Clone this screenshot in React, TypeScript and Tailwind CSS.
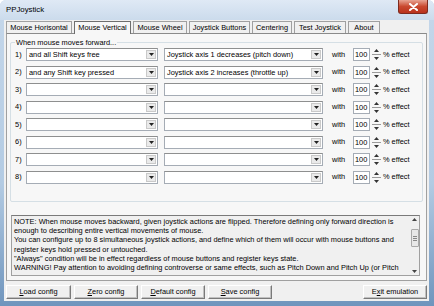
import React from 'react';

const font = { fontFamily: '"Liberation Sans", Arial, sans-serif' };

const tabs = [
  { label: 'Mouse Horisontal', w: 'w-[66px]' },
  { label: 'Mouse Vertical', w: 'w-[57px]', active: true },
  { label: 'Mouse Wheel', w: 'w-[54px]' },
  { label: 'Joystick Buttons', w: 'w-[61px]' },
  { label: 'Centering', w: 'w-[40px]' },
  { label: 'Test Joystick', w: 'w-[52px]' },
  { label: 'About', w: 'w-[32px]' },
];

const rows = [
  { cond: 'and all Shift keys free', action: 'Joystick axis 1 decreases (pitch down)' },
  { cond: 'and any Shift key pressed', action: 'Joystick axis 2 increases (throttle up)' },
  { cond: '', action: '' },
  { cond: '', action: '' },
  { cond: '', action: '' },
  { cond: '', action: '' },
  { cond: '', action: '' },
  { cond: '', action: '' },
];

const Combo = ({ text, w }: { text: string; w: string }) => (
  <div className={`${w} h-[13px] flex items-stretch bg-white border border-[#a5acb5] border-t-[#8e8f8f]`}>
    <div className="flex-1 px-[2px] leading-[11px] truncate text-black">{text}</div>
    <div className="w-[10px] m-[1px] flex items-center justify-center bg-[#eaeaea] border border-[#c9c9c9]">
      <svg width="5" height="3" viewBox="0 0 5 3"><path d="M0 0h5L2.5 3z" fill="#222" /></svg>
    </div>
  </div>
);

const Btn = ({ children, w }: { children: React.ReactNode; w: string }) => (
  <div className={`${w} h-[14px] flex items-center justify-center bg-[#f0f0f0] border border-[#fff] border-r-[#7a7a7a] border-b-[#7a7a7a] shadow-[inset_-1px_-1px_0_#c0c0c0] text-black`}>
    {children}
  </div>
);

export default function App() {
  return (
    <div
      className="w-[434px] h-[306px] flex flex-col bg-[linear-gradient(180deg,#c5d7ea_0%,#b3cbe3_60%,#6f95bd_100%)] rounded-t-[6px] overflow-hidden text-[7.4px]"
      style={font}
    >
      {/* title bar */}
      <div className="h-[20px] shrink-0 flex items-start justify-between pl-[6px] pr-[6px] bg-[linear-gradient(180deg,#dfe9f5,#cbdbec)]">
        <span className="mt-[6px] text-[7.8px] text-black leading-none">PPJoystick</span>
        <div className="w-[30px] h-[14px] flex items-center justify-center rounded-b-[3px] bg-[linear-gradient(180deg,#e8a493_0%,#c9482f_50%,#b9321c_100%)] border border-[#7d2a1e] border-t-0">
          <svg width="9" height="8" viewBox="0 0 9 8">
            <path d="M1 1l7 6M8 1L1 7" stroke="#fff" strokeWidth="2" strokeLinecap="round" />
          </svg>
        </div>
      </div>

      {/* client area */}
      <div className="flex-1 mx-[4px] mr-[5px] mb-[5px] bg-[#f0f0f0] flex flex-col pl-[2px] pr-[2px]">
        {/* tabs */}
        <div className="h-[13px] shrink-0 flex items-end gap-[2px]">
          {tabs.map((t) =>
            t.active ? (
              <div
                key={t.label}
                className={`${t.w} h-[13px] flex items-center justify-center bg-[#f7f7f7] border border-[#6e6e6e] border-b-0 text-black relative top-[1px]`}
              >
                {t.label}
              </div>
            ) : (
              <div
                key={t.label}
                className={`${t.w} h-[12px] flex items-center justify-center bg-[#f0f0f0] border border-[#a0a0a0] border-b-0 text-black`}
              >
                {t.label}
              </div>
            )
          )}
        </div>

        {/* tab panel */}
        <div className="h-[248px] shrink-0 bg-[#f7f7f7] border border-[#a0a0a0] border-t-[#8a8a8a] flex flex-col px-[3px]">
          {/* group box */}
          <div className="mt-[8px] h-[160px] border border-[#d5dfe5] rounded-[2px] relative flex flex-col pt-[5px]">
            <span className="absolute -top-[5px] left-[4px] px-[1px] bg-[#f7f7f7] leading-[9px] text-black">
              When mouse moves forward...
            </span>
            <div className="flex flex-col gap-[4.5px]">
              {rows.map((r, i) => (
                <div key={i} className="h-[13px] flex items-center">
                  <span className="w-[15px] pl-[4px] text-black">{i + 1})</span>
                  <Combo text={r.cond} w="w-[132px]" />
                  <div className="w-[6px]" />
                  <Combo text={r.action} w="w-[159px]" />
                  <span className="ml-[9px] w-[21px] text-black">with</span>
                  <div className="w-[17px] h-[13px] bg-white border border-[#a5acb5] leading-[11px] pl-[1px] text-black">100</div>
                  <div className="w-[12px] h-[13px] flex flex-col items-center justify-center gap-[2px]">
                    <svg width="5" height="3" viewBox="0 0 5 3"><path d="M0 3h5L2.5 0z" fill="#333" /></svg>
                    <div className="w-[9px] h-px bg-[#9a9a9a]" />
                    <svg width="5" height="3" viewBox="0 0 5 3"><path d="M0 0h5L2.5 3z" fill="#333" /></svg>
                  </div>
                  <span className="ml-[1px] text-black">% effect</span>
                </div>
              ))}
            </div>
          </div>

          {/* note memo */}
          <div className="mt-[13px] ml-[1px] w-[409px] h-[61px] bg-[#f0f0f0] border border-[#a0a0a0] border-t-[#7a7a7a] flex">
            <div className="flex-1 pl-[2px] pt-[1px] leading-[9.2px] text-black overflow-hidden">
              <div className="whitespace-nowrap">NOTE: When mouse moves backward, given joystick actions are flipped. Therefore defining only forward direction is</div>
              <div className="whitespace-nowrap">enough to describing entire vertical movements of mouse.</div>
              <div className="whitespace-nowrap">You can configure up to 8 simultaneous joystick actions, and define which of them will occur with mouse buttons and</div>
              <div className="whitespace-nowrap">register keys hold pressed or untouched.</div>
              <div className="whitespace-nowrap">"Always" condition will be in effect regardless of mouse buttons and register keys state.</div>
              <div className="whitespace-nowrap">WARNING! Pay attention to avoiding defining controverse or same effects, such as Pitch Down and Pitch Up (or Pitch</div>
            </div>
            <div className="w-[9px] flex flex-col items-center py-[2px]">
              <svg width="5" height="4" viewBox="0 0 5 4"><path d="M0 3h5L2.5 0z" fill="#444" /></svg>
              <div className="mt-[7px] w-[8px] h-[18px] bg-[#e8e8e8] border border-[#a9a9a9] rounded-[1px] flex flex-col items-center justify-center gap-[1px]">
                <div className="w-[4px] h-px bg-[#888]" />
                <div className="w-[4px] h-px bg-[#888]" />
                <div className="w-[4px] h-px bg-[#888]" />
              </div>
              <div className="flex-1" />
              <svg width="5" height="4" viewBox="0 0 5 4"><path d="M0 1h5L2.5 4z" fill="#444" /></svg>
            </div>
          </div>
        </div>

        {/* buttons */}
        <div className="mt-[4px] flex items-center gap-[3px]">
          <Btn w="w-[65px]"><span><u>L</u>oad config</span></Btn>
          <Btn w="w-[64px]"><span><u>Z</u>ero config</span></Btn>
          <Btn w="w-[64px]"><span><u>D</u>efault config</span></Btn>
          <Btn w="w-[64px]"><span><u>S</u>ave config</span></Btn>
          <div className="flex-1" />
          <Btn w="w-[64px]"><span>E<u>x</u>it emulation</span></Btn>
        </div>
      </div>
    </div>
  );
}
